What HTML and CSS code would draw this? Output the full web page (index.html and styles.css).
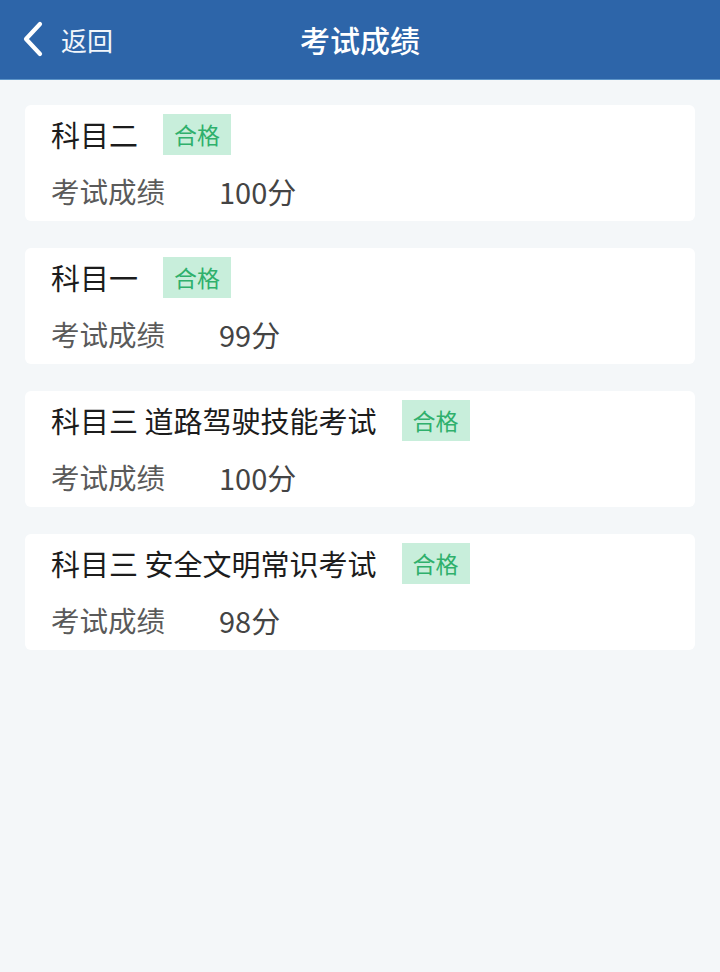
FILE: index.html
```html
<!DOCTYPE html>
<html lang="zh">
<head>
<meta charset="utf-8">
<link rel="stylesheet" href="styles.css">
</head>
<body>
<header class="topbar">
  <div class="back">
    <svg class="chev" width="24" height="36" viewBox="0 0 24 36"><path d="M19 3 L5 18 L19 33" fill="none" stroke="#fff" stroke-width="4.2" stroke-linecap="round" stroke-linejoin="round"/></svg>
    <span class="back-text">返回</span>
  </div>
  <h1 class="title">考试成绩</h1>
</header>
<main class="list">
  <section class="card">
    <div class="row-title"><span class="subject">科目二</span><span class="badge">合格</span></div>
    <div class="row-score"><span class="label">考试成绩</span><span class="score">100分</span></div>
  </section>
  <section class="card">
    <div class="row-title"><span class="subject">科目一</span><span class="badge">合格</span></div>
    <div class="row-score"><span class="label">考试成绩</span><span class="score">99分</span></div>
  </section>
  <section class="card">
    <div class="row-title"><span class="subject">科目三 道路驾驶技能考试</span><span class="badge">合格</span></div>
    <div class="row-score"><span class="label">考试成绩</span><span class="score">100分</span></div>
  </section>
  <section class="card">
    <div class="row-title"><span class="subject">科目三 安全文明常识考试</span><span class="badge">合格</span></div>
    <div class="row-score"><span class="label">考试成绩</span><span class="score">98分</span></div>
  </section>
</main>
</body>
</html>
```

FILE: styles.css
```css
* { box-sizing: border-box; }
html, body {
  margin: 0;
  padding: 0;
  height: 100%;
}
body {
  background: #f4f7f9;
  font-family: "Noto Sans CJK SC", "Noto Sans", sans-serif;
  width: 720px;
  height: 972px;
  overflow: hidden;
}
.topbar {
  height: 80px;
  background: #2d65a9;
  border-bottom: 1px solid #5d95c9;
  display: flex;
  align-items: center;
  position: relative;
  padding-left: 21px;
}
.back {
  display: flex;
  align-items: center;
  gap: 16px;
  color: #fff;
}
.chev { display: block; margin-top: -2px; }
.back-text {
  font-size: 26px;
  line-height: 1;
  color: #f2f6fb;
}
.title {
  position: absolute;
  left: 0;
  right: 0;
  top: 0;
  height: 80px;
  margin: 0;
  display: flex;
  align-items: center;
  justify-content: center;
  font-size: 30px;
  font-weight: 500;
  color: #fff;
  pointer-events: none;
  padding-bottom: 3px;
}
.list {
  display: flex;
  flex-direction: column;
  gap: 27px;
  padding: 25px 25px 0 25px;
}
.card {
  background: #fff;
  border-radius: 6px;
  height: 116px;
  padding: 8px 26px 0 26px;
  display: flex;
  flex-direction: column;
}
.row-title {
  display: flex;
  align-items: center;
  height: 42px;
  gap: 25px;
}
.subject {
  font-size: 29px;
  color: #1c1c1c;
  line-height: 1;
}
.badge {
  background: #c8eedb;
  color: #2fb06c;
  font-size: 23px;
  line-height: 1;
  width: 68px;
  height: 41px;
  display: flex;
  align-items: center;
  justify-content: center;
}
.row-score {
  display: flex;
  align-items: center;
  height: 40px;
  margin-top: 16px;
}
.label {
  font-size: 28.5px;
  color: #5a5a5a;
  width: 168px;
  line-height: 1;
}
.score {
  font-size: 29px;
  color: #444;
  line-height: 1;
}
```
